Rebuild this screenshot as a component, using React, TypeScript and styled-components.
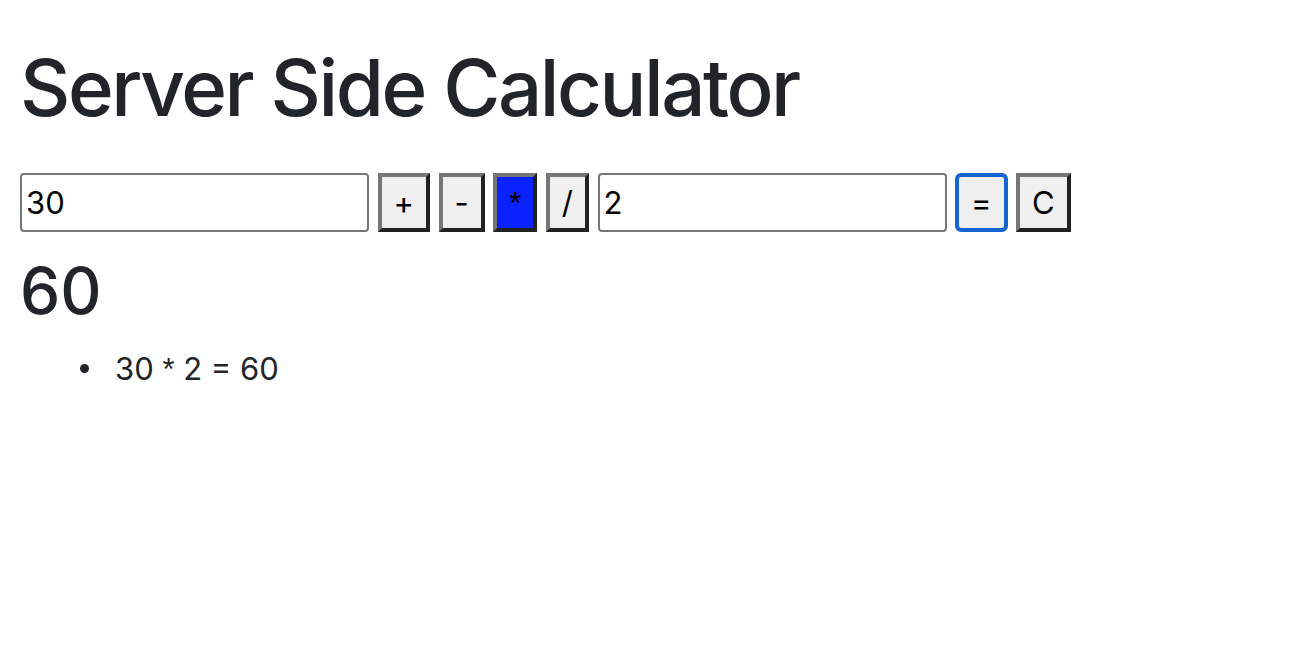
import React from "react";
import styled, { createGlobalStyle } from "styled-components";

const Global = createGlobalStyle`
  html, body { margin: 0; padding: 0; background: #fff; }
  body {
    font-family: Inter, "Liberation Sans", Arial, sans-serif;
    color: #212529;
  }
`;

const Page = styled.main`
  padding: 40px 20px;
`;

const Title = styled.h1`
  margin: 0 0 37px;
  font-size: 78px;
  line-height: 96px;
  font-weight: 500;
  letter-spacing: -2.45px;
  color: #212529;
`;

const Controls = styled.form`
  display: flex;
  align-items: stretch;
  gap: 8.5px;
  height: 59px;
`;

const NumberInput = styled.input`
  box-sizing: border-box;
  width: 349px;
  height: 59px;
  margin: 0;
  padding: 0 4px;
  border: 2px solid #767676;
  border-radius: 4px;
  background: #fff;
  font-family: Inter, "Liberation Sans", Arial, sans-serif;
  font-size: 31px;
  color: #000;
  outline: none;
`;

const OpButton = styled.button<{ $active?: boolean; $focused?: boolean }>`
  box-sizing: border-box;
  height: 59px;
  margin: 0;
  padding: 0 12px;
  border-width: 4px;
  border-style: solid;
  border-color: ${(p) => (p.$focused ? "#1464d2" : "#767676 #212121 #212121 #767676")};
  border-radius: ${(p) => (p.$focused ? "6px" : "0")};
  background: ${(p) => (p.$active ? "#0a22ff" : "#efefef")};
  color: #000;
  font-family: Inter, "Liberation Sans", Arial, sans-serif;
  font-size: 31px;
  line-height: 1;
  cursor: pointer;
`;

const Star = styled.span`
  font-family: "Liberation Sans", Arial, sans-serif;
`;

const Result = styled.h2`
  margin: 21px 0 15px;
  font-size: 64px;
  line-height: 76.8px;
  font-weight: 500;
  color: #212529;
`;

const History = styled.ul`
  margin: 0;
  padding-left: 95px;
  list-style: none;
  font-size: 31px;
  line-height: 48px;
  color: #212529;
`;

const HistoryItem = styled.li`
  &::before {
    content: "";
    display: inline-block;
    width: 9px;
    height: 9px;
    border-radius: 50%;
    background: #212529;
    margin-left: -35px;
    margin-right: 26px;
    vertical-align: 0.22em;
  }
`;

export default function App() {
  const ops = [
    { label: "+" },
    { label: "-" },
    { label: "*", active: true },
    { label: "/" },
  ];
  return (
    <>
      <Global />
      <Page>
        <Title>Server Side Calculator</Title>
        <Controls onSubmit={(e) => e.preventDefault()}>
          <NumberInput type="text" defaultValue="30" />
          {ops.map((o) => (
            <OpButton key={o.label} type="button" $active={o.active}>
              {o.label === "*" ? <Star>*</Star> : o.label}
            </OpButton>
          ))}
          <NumberInput type="text" defaultValue="2" />
          <OpButton type="submit" $focused>
            =
          </OpButton>
          <OpButton type="button">C</OpButton>
        </Controls>
        <Result>60</Result>
        <History>
          <HistoryItem>
            30 <Star>*</Star> 2 = 60
          </HistoryItem>
        </History>
      </Page>
    </>
  );
}
